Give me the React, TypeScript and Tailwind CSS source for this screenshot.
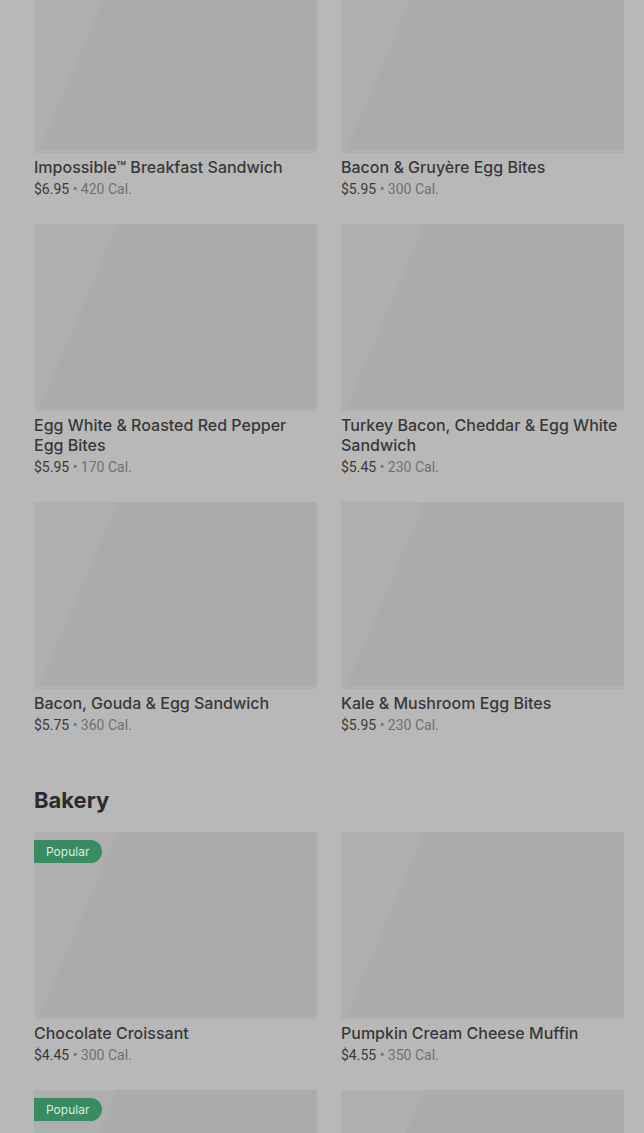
import React from 'react';

type Item = {
  name: string;
  price: string;
  cal: number;
  popular?: boolean;
};

const breakfast: Item[] = [
  { name: 'Impossible™ Breakfast Sandwich', price: '$6.95', cal: 420 },
  { name: 'Bacon & Gruyère Egg Bites', price: '$5.95', cal: 300 },
  { name: 'Egg White & Roasted Red Pepper Egg Bites', price: '$5.95', cal: 170 },
  { name: 'Turkey Bacon, Cheddar & Egg White Sandwich', price: '$5.45', cal: 230 },
  { name: 'Bacon, Gouda & Egg Sandwich', price: '$5.75', cal: 360 },
  { name: 'Kale & Mushroom Egg Bites', price: '$5.95', cal: 230 },
];

const bakery: Item[] = [
  { name: 'Chocolate Croissant', price: '$4.45', cal: 300, popular: true },
  { name: 'Pumpkin Cream Cheese Muffin', price: '$4.55', cal: 350 },
  { name: 'Butter Croissant', price: '$3.75', cal: 260, popular: true },
  { name: 'Banana Nut Bread', price: '$3.95', cal: 420 },
];

function MenuCard({ item }: { item: Item }) {
  return (
    <div className="flex flex-col">
      {/* Placeholder image (loading shimmer) */}
      <div className="relative h-[187px] bg-[linear-gradient(113deg,#afafaf_0%,#afafaf_23%,#ababab_23%,#ababab_100%)] border-b-[3px] border-[#b0b0b0]">
        {item.popular && (
          <span className="absolute left-0 top-2 flex h-[23px] items-center rounded-r-full bg-[#3b8b62] pl-3 pr-[13px] text-[12px] text-[#dcebe3]">
            Popular
          </span>
        )}
      </div>
      <h3 className="mt-1 text-[16px] leading-5 font-medium text-[#383838]">{item.name}</h3>
      <p className="mt-0.5 text-[14px] leading-5 font-['Roboto','Liberation_Sans',sans-serif]">
        <span className="text-[#3a3a3a]">{item.price}</span>
        <span className="text-[#707070]"> • {item.cal} Cal.</span>
      </p>
    </div>
  );
}

export default function App() {
  return (
    <div className="h-[1133px] w-full overflow-hidden bg-[#b8b8b8] font-['Inter','Liberation_Sans',sans-serif]">
      <div className="-mt-[34px] pl-[34px] pr-5">
        <div className="grid grid-cols-2 gap-x-6 gap-y-[25px]">
          {breakfast.map((item) => (
            <MenuCard key={item.name} item={item} />
          ))}
        </div>

        <h2 className="mt-[51px] mb-[18px] text-[22px] leading-7 font-bold text-[#2b2b2b]">Bakery</h2>

        <div className="grid grid-cols-2 gap-x-6 gap-y-[25px]">
          {bakery.map((item) => (
            <MenuCard key={item.name} item={item} />
          ))}
        </div>
      </div>
    </div>
  );
}
